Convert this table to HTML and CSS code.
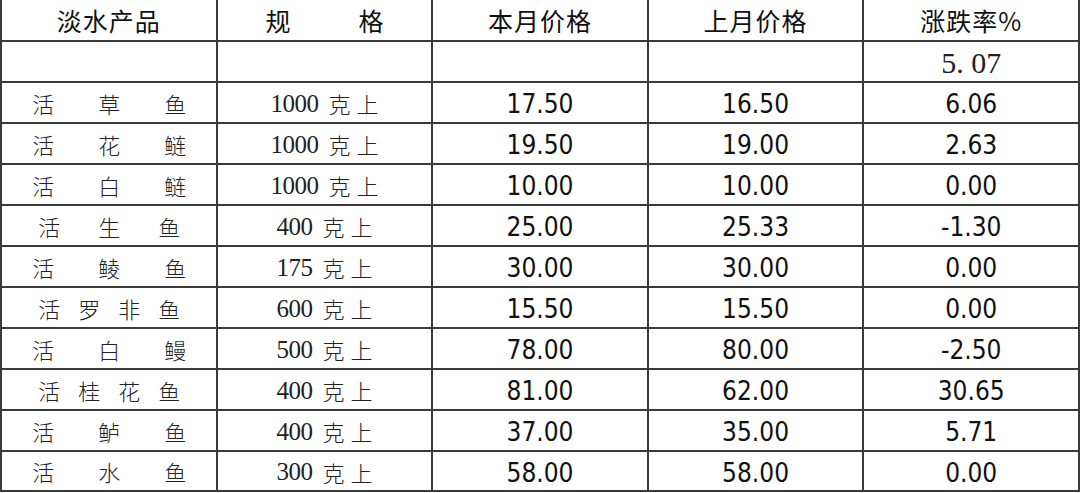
FILE: index.html
```html
<!DOCTYPE html>
<html lang="zh-CN">
<head>
<meta charset="utf-8">
<title>淡水产品价格</title>
<link rel="stylesheet" href="styles.css">
</head>
<body>
<div class="sheet">
  <div class="cell head"><span class="hd">淡水产品</span></div>
  <div class="cell head"><span class="spread spec-head"><span>规</span><span>格</span></span></div>
  <div class="cell head"><span class="hd">本月价格</span></div>
  <div class="cell head"><span class="hd">上月价格</span></div>
  <div class="cell head"><span class="hd">涨跌率%</span></div>

  <div class="cell"></div>
  <div class="cell"></div>
  <div class="cell"></div>
  <div class="cell"></div>
  <div class="cell"><span class="total">5. 07</span></div>

  <div class="cell name"><span class="spread wide"><span>活</span><span>草</span><span>鱼</span></span></div>
  <div class="cell spec"><span class="dg">1000</span><span class="cn">克上</span></div>
  <div class="cell num">17.50</div>
  <div class="cell num">16.50</div>
  <div class="cell num">6.06</div>

  <div class="cell name"><span class="spread wide"><span>活</span><span>花</span><span>鲢</span></span></div>
  <div class="cell spec"><span class="dg">1000</span><span class="cn">克上</span></div>
  <div class="cell num">19.50</div>
  <div class="cell num">19.00</div>
  <div class="cell num">2.63</div>

  <div class="cell name"><span class="spread wide"><span>活</span><span>白</span><span>鲢</span></span></div>
  <div class="cell spec"><span class="dg">1000</span><span class="cn">克上</span></div>
  <div class="cell num">10.00</div>
  <div class="cell num">10.00</div>
  <div class="cell num">0.00</div>

  <div class="cell name"><span class="spread narrow"><span>活</span><span>生</span><span>鱼</span></span></div>
  <div class="cell spec"><span class="dg">400</span><span class="cn">克上</span></div>
  <div class="cell num">25.00</div>
  <div class="cell num">25.33</div>
  <div class="cell num">-1.30</div>

  <div class="cell name"><span class="spread wide"><span>活</span><span>鲮</span><span>鱼</span></span></div>
  <div class="cell spec"><span class="dg">175</span><span class="cn">克上</span></div>
  <div class="cell num">30.00</div>
  <div class="cell num">30.00</div>
  <div class="cell num">0.00</div>

  <div class="cell name"><span class="spread narrow"><span>活</span><span>罗</span><span>非</span><span>鱼</span></span></div>
  <div class="cell spec"><span class="dg">600</span><span class="cn">克上</span></div>
  <div class="cell num">15.50</div>
  <div class="cell num">15.50</div>
  <div class="cell num">0.00</div>

  <div class="cell name"><span class="spread wide"><span>活</span><span>白</span><span>鳗</span></span></div>
  <div class="cell spec"><span class="dg">500</span><span class="cn">克上</span></div>
  <div class="cell num">78.00</div>
  <div class="cell num">80.00</div>
  <div class="cell num">-2.50</div>

  <div class="cell name"><span class="spread narrow"><span>活</span><span>桂</span><span>花</span><span>鱼</span></span></div>
  <div class="cell spec"><span class="dg">400</span><span class="cn">克上</span></div>
  <div class="cell num">81.00</div>
  <div class="cell num">62.00</div>
  <div class="cell num">30.65</div>

  <div class="cell name"><span class="spread wide"><span>活</span><span>鲈</span><span>鱼</span></span></div>
  <div class="cell spec"><span class="dg">400</span><span class="cn">克上</span></div>
  <div class="cell num">37.00</div>
  <div class="cell num">35.00</div>
  <div class="cell num">5.71</div>

  <div class="cell name"><span class="spread wide"><span>活</span><span>水</span><span>鱼</span></span></div>
  <div class="cell spec"><span class="dg">300</span><span class="cn">克上</span></div>
  <div class="cell num">58.00</div>
  <div class="cell num">58.00</div>
  <div class="cell num">0.00</div>
</div>
</body>
</html>
```

FILE: styles.css
```css
html, body {
  margin: 0;
  padding: 0;
  background: #ffffff;
}

.sheet {
  width: 1080px;
  box-sizing: border-box;
  display: grid;
  grid-template-columns: repeat(5, 1fr);
  grid-template-rows: 40px repeat(10, 39px) 38px;
  gap: 2px;
  padding: 0 2px 2px 2px;
  background: #3a3a3a;
}

.cell {
  background: #ffffff;
  display: flex;
  align-items: center;
  justify-content: center;
  color: #151515;
  overflow: hidden;
}

.head .hd {
  font-family: "Noto Sans CJK SC", sans-serif;
  font-size: 25px;
  letter-spacing: 1px;
  line-height: 1;
  color: #111;
}

.spread {
  display: flex;
  justify-content: space-between;
  align-items: center;
}

.spec-head {
  width: 118px;
  font-family: "Noto Sans CJK SC", sans-serif;
  font-size: 25px;
  line-height: 1;
  color: #111;
}

.name .spread {
  font-family: "Noto Sans CJK SC", sans-serif;
  font-weight: 300;
  font-size: 22px;
  line-height: 1;
  color: #222;
}

.name .wide {
  width: 154px;
  margin-left: 1px;
}

.name .narrow {
  width: 142px;
  margin-left: 1px;
}

.spec {
  color: #222;
  padding-top: 1px;
}

.spec .dg {
  font-family: "Liberation Serif", serif;
  font-size: 25px;
  line-height: 1;
  letter-spacing: -0.5px;
}

.spec .cn {
  font-family: "Noto Sans CJK SC", sans-serif;
  font-weight: 300;
  font-size: 22px;
  line-height: 1;
  margin-left: 10px;
  letter-spacing: 6px;
  margin-right: -6px;
}

.num {
  font-family: "DejaVu Sans Condensed", "DejaVu Sans", sans-serif;
  font-stretch: condensed;
  font-size: 26px;
  line-height: 1;
  color: #111;
  padding-top: 3px;
}

.total {
  font-family: "Liberation Serif", serif;
  font-size: 30px;
  line-height: 1;
  white-space: pre;
  color: #222;
  padding-top: 2px;
}
```
